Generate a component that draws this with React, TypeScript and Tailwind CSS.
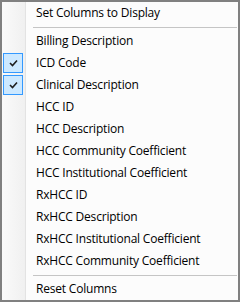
import React from "react";

const items: { label: string; checked?: boolean }[] = [
  { label: "Billing Description" },
  { label: "ICD Code", checked: true },
  { label: "Clinical Description", checked: true },
  { label: "HCC ID" },
  { label: "HCC Description" },
  { label: "HCC Community Coefficient" },
  { label: "HCC Institutional Coefficient" },
  { label: "RxHCC ID" },
  { label: "RxHCC Description" },
  { label: "RxHCC Institutional Coefficient" },
  { label: "RxHCC Community Coefficient" },
];

function Check() {
  return (
    <div className="absolute left-px top-px w-[20px] h-[20px] border border-[#3399ff] bg-[#cce8ff] flex items-center justify-center">
      <svg width="9" height="8" viewBox="0 0 9 8">
        <path d="M1 4 L3.5 6.5 L8 1.5" fill="none" stroke="#1e1e1e" strokeWidth="1.6" />
      </svg>
    </div>
  );
}

function Row({ label, checked }: { label: string; checked?: boolean }) {
  return (
    <div className="relative h-[22px] flex items-center">
      {checked && <Check />}
      <span className="pl-[34px] leading-none">{label}</span>
    </div>
  );
}

function Sep() {
  return (
    <div className="h-[6px] flex items-center pl-[31px] pr-px">
      <div className="h-px w-full bg-[#c5c5c5]" />
    </div>
  );
}

export default function App() {
  return (
    <div
      className="w-[240px] h-[302px] bg-[#808080] p-[2px]"
      style={{ fontFamily: '"Open Sans", "Noto Sans", sans-serif' }}
    >
      <div className="relative w-full h-full bg-[#fcfcfc] text-[12px] text-black tracking-[-0.2px]">
        <div className="absolute left-0 top-0 bottom-0 w-[23px] bg-gradient-to-r from-[#fafafa] to-[#f0f0f0]" />
        <div className="absolute left-[23px] top-0 bottom-0 w-px bg-[#e3e3e3]" />
        <div className="relative">
          <Row label="Set Columns to Display" />
          <Sep />
          {items.map((it) => (
            <Row key={it.label} label={it.label} checked={it.checked} />
          ))}
          <Sep />
          <Row label="Reset Columns" />
        </div>
      </div>
    </div>
  );
}
